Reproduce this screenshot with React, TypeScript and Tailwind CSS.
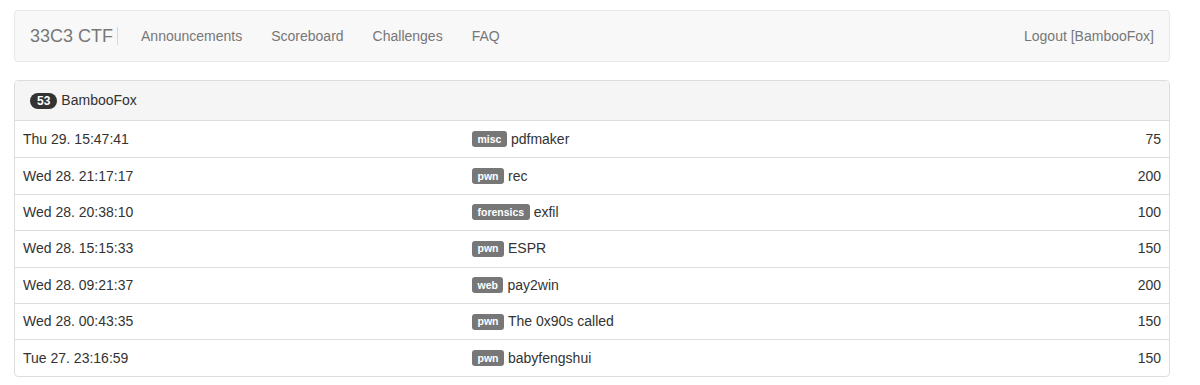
const solves = [
  { time: "Thu 29. 15:47:41", cat: "misc", name: "pdfmaker", points: 75 },
  { time: "Wed 28. 21:17:17", cat: "pwn", name: "rec", points: 200 },
  { time: "Wed 28. 20:38:10", cat: "forensics", name: "exfil", points: 100 },
  { time: "Wed 28. 15:15:33", cat: "pwn", name: "ESPR", points: 150 },
  { time: "Wed 28. 09:21:37", cat: "web", name: "pay2win", points: 200 },
  { time: "Wed 28. 00:43:35", cat: "pwn", name: "The 0x90s called", points: 150 },
  { time: "Tue 27. 23:16:59", cat: "pwn", name: "babyfengshui", points: 150 },
]

export default function App() {
  return (
    <div className="w-[1200px] h-[385px] bg-white font-['Liberation_Sans',Arial,sans-serif] text-[14px] text-[#333] pt-[10px] pl-[14px]">
      {/* Navbar */}
      <nav className="w-[1156px] h-[52px] bg-[#f8f8f8] border border-[#e7e7e7] rounded-[4px] flex items-center text-[#777]">
        <div className="flex items-center pl-[15px]">
          <span className="text-[18px] leading-[20px] pr-[4px]">33C3 CTF</span>
          <span className="w-px h-[18px] bg-[#c9dcec]"></span>
        </div>
        <ul className="flex items-center ml-[8px]">
          <li className="px-[15px]">Announcements</li>
          <li className="px-[14px]">Scoreboard</li>
          <li className="px-[15px]">Challenges</li>
          <li className="px-[14px]">FAQ</li>
        </ul>
        <div className="ml-auto pr-[15px]">Logout [BambooFox]</div>
      </nav>

      {/* Team panel */}
      <div className="w-[1156px] mt-[18px] border border-[#ddd] rounded-[4px] overflow-hidden">
        <div className="h-[40px] bg-[#f5f5f5] border-b border-[#ddd] flex items-center px-[15px]">
          <span className="bg-[#333] text-white text-[12px] font-bold leading-none rounded-full px-[7px] py-[2px] h-[16px] flex items-center">53</span>
          <span className="ml-[4px] text-[14px]">BambooFox</span>
        </div>
        {solves.map((s, i) => (
          <div
            key={i}
            className={`grid grid-cols-[449px_1fr_auto] items-center h-[36.4px] px-[8px] ${i > 0 ? "border-t border-[#ddd]" : ""}`}
          >
            <div>{s.time}</div>
            <div className="flex items-center">
              <span className="bg-[#777] text-white font-bold text-[10.5px] leading-none rounded-[3px] px-[5.5px] pt-[2.5px] pb-[3px] mr-[4px]">{s.cat}</span>
              <span>{s.name}</span>
            </div>
            <div className="text-right">{s.points}</div>
          </div>
        ))}
      </div>
    </div>
  )
}
